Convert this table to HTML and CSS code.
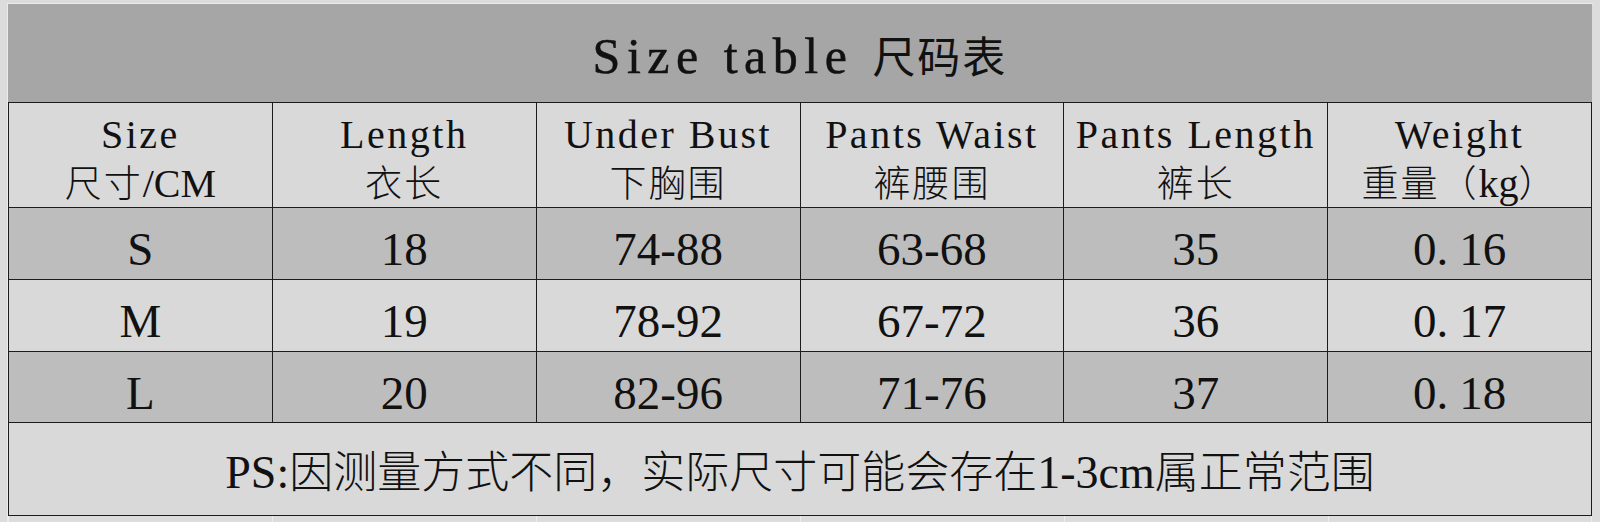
FILE: index.html
```html
<!DOCTYPE html>
<html lang="zh-CN">
<head>
<meta charset="utf-8">
<title>Size table 尺码表</title>
<link rel="stylesheet" href="styles.css">
</head>
<body>
<div class="sheet">
  <div class="frame">
    <div class="title">Size table <span class="cjk">尺码表</span></div>
    <div class="table">
      <div class="cell hd"><div class="l1">Size</div><div class="l2"><span class="cjk">尺寸</span>/CM</div></div>
      <div class="cell hd"><div class="l1">Length</div><div class="l2"><span class="cjk">衣长</span></div></div>
      <div class="cell hd"><div class="l1">Under Bust</div><div class="l2"><span class="cjk">下胸围</span></div></div>
      <div class="cell hd"><div class="l1">Pants Waist</div><div class="l2"><span class="cjk">裤腰围</span></div></div>
      <div class="cell hd"><div class="l1">Pants Length</div><div class="l2"><span class="cjk">裤长</span></div></div>
      <div class="cell hd"><div class="l1">Weight</div><div class="l2"><span class="cjk">重量（</span>kg<span class="cjk">）</span></div></div>

      <div class="cell dk">S</div>
      <div class="cell dk">18</div>
      <div class="cell dk">74-88</div>
      <div class="cell dk">63-68</div>
      <div class="cell dk">35</div>
      <div class="cell dk">0<span class="pt">.</span>16</div>

      <div class="cell lt">M</div>
      <div class="cell lt">19</div>
      <div class="cell lt">78-92</div>
      <div class="cell lt">67-72</div>
      <div class="cell lt">36</div>
      <div class="cell lt">0<span class="pt">.</span>17</div>

      <div class="cell dk">L</div>
      <div class="cell dk">20</div>
      <div class="cell dk">82-96</div>
      <div class="cell dk">71-76</div>
      <div class="cell dk">37</div>
      <div class="cell dk">0<span class="pt">.</span>18</div>

      <div class="cell ps">PS:<span class="cjk">因测量方式不同，实际尺寸可能会存在</span>1-3cm<span class="cjk">属正常范围</span></div>
    </div>
    <div class="below">
      <div class="gl"></div><div class="gl"></div><div class="gl"></div>
      <div class="gl"></div><div class="gl"></div><div class="gl"></div>
    </div>
  </div>
</div>
</body>
</html>
```

FILE: styles.css
```css
html, body {
  margin: 0;
  padding: 0;
  background: #dcdcdc;
  overflow: hidden;
}

body {
  font-family: "Liberation Serif", "Noto Sans CJK SC", serif;
  color: #111;
}

.sheet {
  padding: 3px 0 0 7px;
  height: 522px;
  box-sizing: border-box;
}

.frame {
  border-top: 1px solid #ebebeb;
  border-left: 1px solid #ebebeb;
  width: 1585px;
}

.cjk {
  font-family: "Noto Sans CJK SC", sans-serif;
  font-weight: 300;
  line-height: 1;
}

.title {
  width: 1584px;
  height: 98px;
  box-sizing: border-box;
  background: #a6a6a6;
  text-align: center;
  font-size: 50px;
  line-height: 56px;
  padding-top: 24px;
  letter-spacing: 6.5px;
  -webkit-text-stroke: 0.5px #111;
}

.title .cjk {
  font-size: 43px;
  letter-spacing: 2px;
  font-weight: 400;
  -webkit-text-stroke: 0;
}

.table {
  display: grid;
  grid-template-columns: repeat(6, 1fr);
  grid-template-rows: 104px 71px 71px 70px 92px;
  gap: 1px;
  padding: 1px;
  width: 1584px;
  box-sizing: border-box;
  background: #1c1c1c;
}

.cell {
  text-align: center;
  white-space: nowrap;
}

.hd {
  background: #d9d9d9;
  font-size: 40px;
  line-height: 49px;
  padding-top: 7px;
}

.hd .l1 {
  letter-spacing: 2.5px;
}

.hd .cjk {
  font-size: 37px;
  letter-spacing: 2px;
}

.dk,
.lt {
  font-size: 47px;
  line-height: 52px;
  padding-top: 15px;
}

.dk {
  background: #bdbdbd;
}

.lt {
  background: #d9d9d9;
}

.pt {
  margin-right: 11px;
}

.ps {
  grid-column: 1 / -1;
  background: #d9d9d9;
  font-size: 46px;
  line-height: 51px;
  padding-top: 24px;
}

.ps .cjk {
  font-size: 44px;
}

.below {
  display: grid;
  grid-template-columns: repeat(6, 1fr);
  width: 1584px;
  height: 8px;
}

.gl {
  border-left: 1px solid #ececec;
}

.gl:last-child {
  border-right: 1px solid #ececec;
}
```
